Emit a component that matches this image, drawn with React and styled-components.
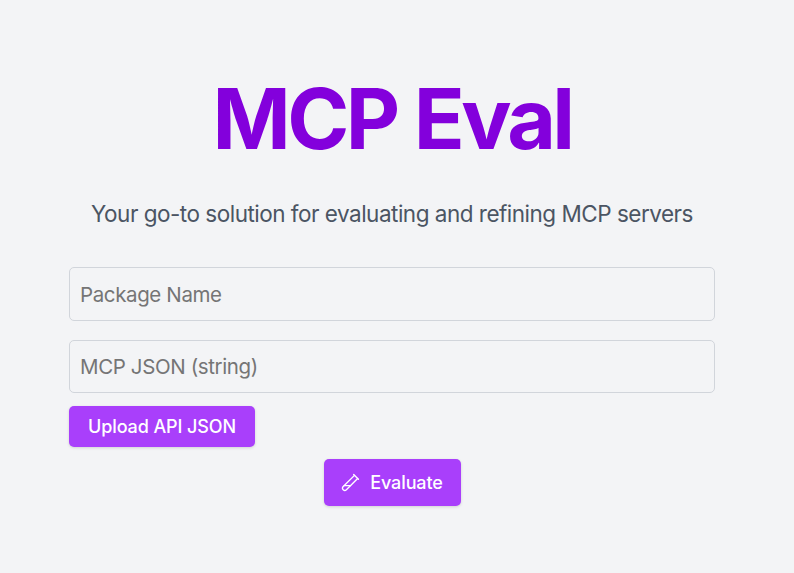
import React from "react";
import styled, { createGlobalStyle } from "styled-components";
import { TestTubeDiagonal } from "lucide-react";

const Global = createGlobalStyle`
  html, body { margin: 0; padding: 0; background: #f3f4f6; }
  body { font-family: Inter, "Liberation Sans", sans-serif; }
`;

const Page = styled.main`
  box-sizing: border-box;
  height: 573px;
  padding: 73px 79px 0 69px;
  display: flex;
  flex-direction: column;
  background: #f3f4f6;
  overflow: hidden;
`;

const Title = styled.h1`
  margin: 0;
  text-align: center;
  font-size: 84px;
  line-height: 92px;
  font-weight: 700;
  letter-spacing: -3.6px;
  word-spacing: 1px;
  color: #8300dc;
`;

const Subtitle = styled.p`
  margin: 33px 0 0;
  text-align: center;
  font-size: 22.5px;
  line-height: 32px;
  letter-spacing: -0.5px;
  color: #4b5563;
`;

const Form = styled.form`
  margin-top: 37px;
  display: flex;
  flex-direction: column;
`;

const Field = styled.input`
  box-sizing: border-box;
  width: 100%;
  height: ${(p) => p.$height}px;
  margin-bottom: ${(p) => p.$gap}px;
  padding: 0 10px;
  border: 1.2px solid #d1d5db;
  border-radius: 5px;
  background: #f3f4f6;
  font: 400 20.5px Inter, sans-serif;
  letter-spacing: -0.38px;
  color: #111827;
  outline: none;
  &::placeholder { color: #757575; opacity: 1; }
`;

const Button = styled.button`
  display: inline-flex;
  align-items: center;
  justify-content: center;
  gap: ${(p) => p.$gap || 0}px;
  box-sizing: border-box;
  border: 0;
  border-radius: 5px;
  background: #a93ffb;
  color: #fff;
  font: 450 18px Inter, sans-serif;
  letter-spacing: -0.1px;
  box-shadow: 0 1px 3px rgba(0, 0, 0, 0.14);
  width: ${(p) => p.$width}px;
  height: ${(p) => p.$height}px;
`;

const UploadRow = styled.div`
  display: flex;
`;

const ActionRow = styled.div`
  margin-top: 12px;
  display: flex;
  justify-content: center;
`;

export default function App() {
  return (
    <>
      <Global />
      <Page>
        <Title>MCP Eval</Title>
        <Subtitle>Your go-to solution for evaluating and refining MCP servers</Subtitle>
        <Form>
          <Field $height={54} $gap={19} placeholder="Package Name" />
          <Field $height={53} $gap={13} placeholder="MCP JSON (string)" />
          <UploadRow>
            <Button type="button" $width={186} $height={41}>Upload API JSON</Button>
          </UploadRow>
          <ActionRow>
            <Button type="button" $width={137} $height={47} $gap={10}>
              <TestTubeDiagonal size={19} strokeWidth={1.7} />
              Evaluate
            </Button>
          </ActionRow>
        </Form>
      </Page>
    </>
  );
}
